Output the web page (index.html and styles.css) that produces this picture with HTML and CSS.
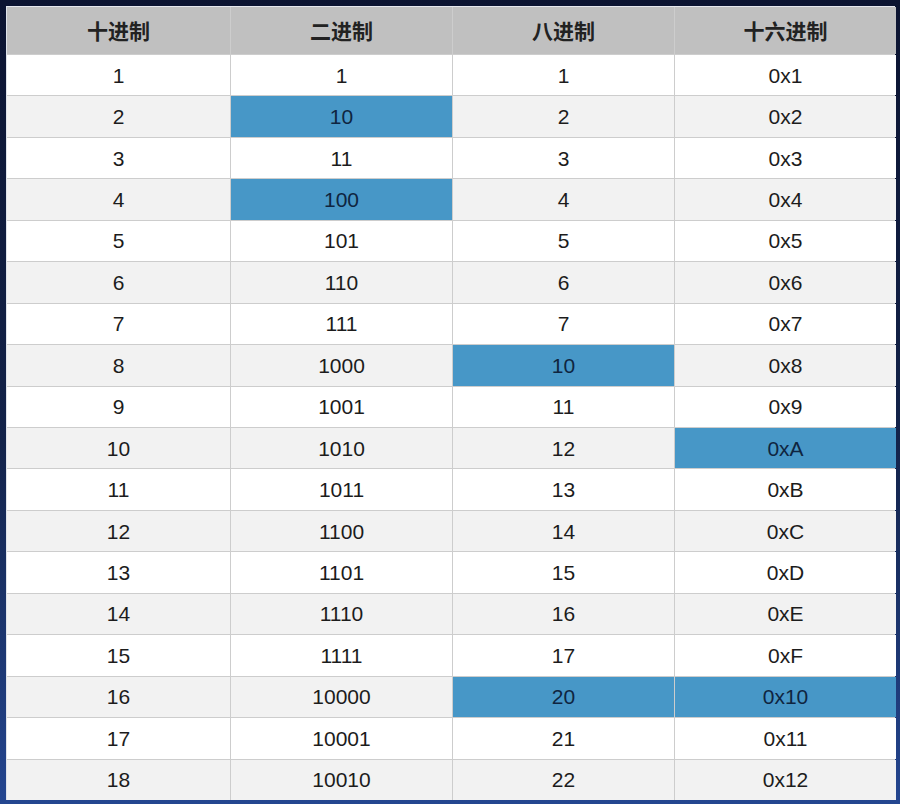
FILE: index.html
```html
<!DOCTYPE html>
<html lang="zh">
<head>
<meta charset="utf-8">
<title>进制对照表</title>
<link rel="stylesheet" href="styles.css">
</head>
<body>
<div class="screen">
  <div class="frame">
    <div class="table">
      <div class="cell head">十进制</div>
      <div class="cell head">二进制</div>
      <div class="cell head">八进制</div>
      <div class="cell head">十六进制</div>

      <div class="cell">1</div><div class="cell">1</div><div class="cell">1</div><div class="cell">0x1</div>
      <div class="cell alt">2</div><div class="cell alt hl">10</div><div class="cell alt">2</div><div class="cell alt">0x2</div>
      <div class="cell">3</div><div class="cell">11</div><div class="cell">3</div><div class="cell">0x3</div>
      <div class="cell alt">4</div><div class="cell alt hl">100</div><div class="cell alt">4</div><div class="cell alt">0x4</div>
      <div class="cell">5</div><div class="cell">101</div><div class="cell">5</div><div class="cell">0x5</div>
      <div class="cell alt">6</div><div class="cell alt">110</div><div class="cell alt">6</div><div class="cell alt">0x6</div>
      <div class="cell">7</div><div class="cell">111</div><div class="cell">7</div><div class="cell">0x7</div>
      <div class="cell alt">8</div><div class="cell alt">1000</div><div class="cell alt hl">10</div><div class="cell alt">0x8</div>
      <div class="cell">9</div><div class="cell">1001</div><div class="cell">11</div><div class="cell">0x9</div>
      <div class="cell alt">10</div><div class="cell alt">1010</div><div class="cell alt">12</div><div class="cell alt hl">0xA</div>
      <div class="cell">11</div><div class="cell">1011</div><div class="cell">13</div><div class="cell">0xB</div>
      <div class="cell alt">12</div><div class="cell alt">1100</div><div class="cell alt">14</div><div class="cell alt">0xC</div>
      <div class="cell">13</div><div class="cell">1101</div><div class="cell">15</div><div class="cell">0xD</div>
      <div class="cell alt">14</div><div class="cell alt">1110</div><div class="cell alt">16</div><div class="cell alt">0xE</div>
      <div class="cell">15</div><div class="cell">1111</div><div class="cell">17</div><div class="cell">0xF</div>
      <div class="cell alt">16</div><div class="cell alt">10000</div><div class="cell alt hl">20</div><div class="cell alt hl">0x10</div>
      <div class="cell">17</div><div class="cell">10001</div><div class="cell">21</div><div class="cell">0x11</div>
      <div class="cell alt">18</div><div class="cell alt">10010</div><div class="cell alt">22</div><div class="cell alt">0x12</div>
    </div>
  </div>
</div>
</body>
</html>
```

FILE: styles.css
```css
html, body {
  margin: 0;
  padding: 0;
}
body {
  width: 900px;
  height: 804px;
  overflow: hidden;
  font-family: "Liberation Sans", Arial, "Noto Sans CJK SC", sans-serif;
}
.screen {
  width: 900px;
  height: 804px;
  box-sizing: border-box;
  padding: 6px 5px 4px 6px;
  background: linear-gradient(180deg, #0c1431 0%, #13234a 55%, #244690 100%);
}
.frame {
  width: 889px;
  height: 794px;
  box-sizing: border-box;
  border-top: 1px solid #e6e8ee;
  border-left: 1px solid #dfe3ea;
}
.table {
  height: 793px;
  display: grid;
  grid-template-columns: 223px 221px 221px 221px;
  grid-template-rows: 47px repeat(18, 1fr);
  column-gap: 1px;
  row-gap: 1px;
  background: #cdcdcd;
}
.cell {
  display: flex;
  align-items: center;
  justify-content: center;
  background: #ffffff;
  color: #1c1c1c;
  font-size: 21px;
  padding-top: 1px;
}
.cell.alt {
  background: #f2f2f2;
}
.cell.head {
  background: #c0c0c0;
  color: #222222;
  font-family: "Noto Sans CJK SC", sans-serif;
  font-weight: 700;
  font-size: 21px;
  padding-top: 0;
  padding-bottom: 2px;
}
.cell.hl {
  background: #4797c7;
  color: #0f2540;
}
```
